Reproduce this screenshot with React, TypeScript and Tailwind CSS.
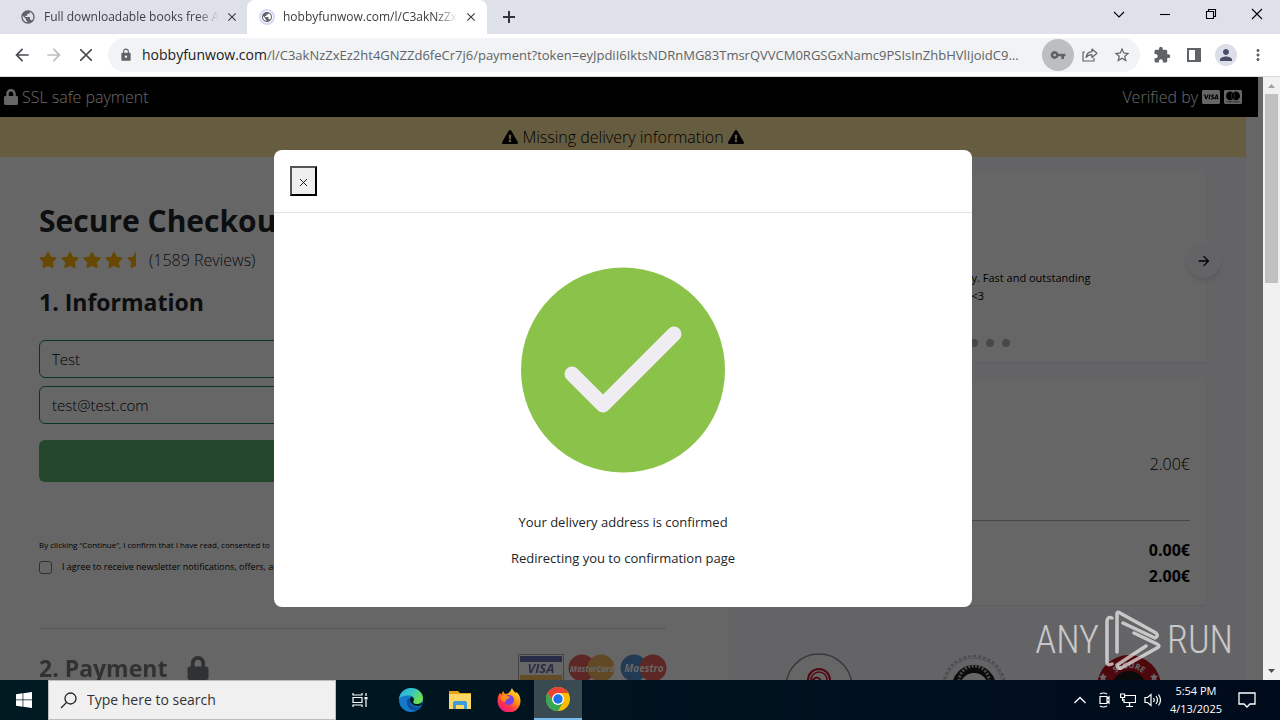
import type { ReactNode } from "react";
import {
  MdArrowBack,
  MdArrowForward,
  MdClose,
  MdExtension,
  MdLock,
  MdMoreVert,
  MdPerson,
  MdPublic,
  MdStarBorder,
  MdVpnKey,
} from "react-icons/md";
import { FaCcMastercard, FaCcVisa, FaExclamationTriangle, FaLock, FaStar, FaStarHalf } from "react-icons/fa";

function IconButton({ label, className = "", children }: { label: string; className?: string; children: ReactNode }) {
  return (
    <button type="button" aria-label={label} className={`flex h-8 w-8 shrink-0 items-center justify-center ${className}`}>
      {children}
    </button>
  );
}

function TabStrip() {
  return (
    <div className="flex h-[34px] shrink-0 items-stretch bg-[#dee1e9] text-xs text-[#3c4043]">
      <div className="flex w-[247px] items-center pl-5 pr-[7px]">
        <MdPublic className="h-4 w-4 shrink-0 text-[#5f6368]" />
        <span className="ml-2 flex-1 whitespace-nowrap [mask-image:linear-gradient(to_right,#000_85%,transparent_97%)]">
          Full downloadable books free A
        </span>
        <button type="button" aria-label="Close tab" className="p-px">
          <MdClose className="h-3.5 w-3.5" />
        </button>
      </div>
      <div className="flex w-[240px] items-center rounded-t-lg bg-white pl-3 pr-2">
        <span className="flex h-4 w-4 shrink-0 items-center justify-center rounded-full border-2 border-[#d5dbf7]">
          <MdPublic className="h-3 w-3 shrink-0 text-[#5f6368]" />
        </span>
        <span className="ml-2 flex-1 whitespace-nowrap [mask-image:linear-gradient(to_right,#000_85%,transparent_97%)]">
          hobbyfunwow.com/l/C3akNzZx
        </span>
        <button type="button" aria-label="Close tab" className="p-px">
          <MdClose className="h-3.5 w-3.5" />
        </button>
      </div>
      <button type="button" aria-label="New tab" className="flex w-11 items-center justify-center">
        <svg viewBox="0 0 12 12" className="h-3 w-3" stroke="#303338" strokeWidth="2">
          <path d="M6 0v12M0 6h12" />
        </svg>
      </button>
      <div className="ml-auto flex h-7 text-black">
        {[
          ["Search tabs", "M1 4l5 5 5-5"],
          ["Minimize", "M1 6.5h10"],
          ["Restore", "M1.5 3.5h7v7h-7zM3.5 3.5v-2h7v7h-2"],
          ["Close", "M1 1l10 10M11 1L1 11"],
        ].map(([label, d]) => (
          <button key={label} type="button" aria-label={label} className="flex w-[46px] items-center justify-center">
            <svg viewBox="0 0 12 12" className="h-3 w-3" fill="none" stroke="currentColor" strokeWidth="1.1">
              <path d={d} />
            </svg>
          </button>
        ))}
      </div>
    </div>
  );
}

function Toolbar() {
  return (
    <div className="flex h-[43px] shrink-0 items-center border-b border-[#d8dadd] bg-white pl-[6px] pr-[6px] text-[#5f6368]">
      <IconButton label="Back" className="text-[#4a4d51]">
        <MdArrowBack className="h-5 w-5" />
      </IconButton>
      <IconButton label="Forward" className="text-[#bcbec1]">
        <MdArrowForward className="h-5 w-5" />
      </IconButton>
      <IconButton label="Stop loading" className="text-[#4a4d51]">
        <svg viewBox="0 0 12 12" className="h-3 w-3" stroke="currentColor" strokeWidth="1.6">
          <path d="M0 0l12 12M12 0L0 12" />
        </svg>
      </IconButton>
      <div className="ml-[6px] flex h-[34px] min-w-0 flex-1 items-center rounded-full bg-[#f1f3f4] pl-[11px] pr-[2px]">
        <MdLock className="h-3.5 w-3.5 shrink-0" />
        <span className="ml-[9px] min-w-0 flex-1 overflow-hidden whitespace-nowrap text-[13px] leading-5">
          <span className="text-sm text-[#202124]">hobbyfunwow.com</span>
          /l/C3akNzZxEz2ht4GNZZd6feCr7j6/payment?token=eyJpdiI6IktsNDRnMG83TmsrQVVCM0RGSGxNamc9PSIsInZhbHVlIjoidC9...
        </span>
        <IconButton label="Saved passwords" className="rounded-full bg-[#bdbebf]">
          <MdVpnKey className="h-4 w-4" />
        </IconButton>
        <IconButton label="Share">
          <svg viewBox="0 0 16 16" className="h-4 w-4" fill="none" stroke="currentColor" strokeWidth="1.2" strokeLinejoin="round">
            <path d="M3 5H1v9h11v-3" />
            <path d="M4 10.500C4.500 7 6.500 5 10 4.700V2l5 4.300-5 4.200V7.700C7.500 7.700 5.500 8.500 4 10.500z" />
          </svg>
        </IconButton>
        <IconButton label="Bookmark">
          <MdStarBorder className="h-[18px] w-[18px]" />
        </IconButton>
      </div>
      <div className="ml-[6px] flex">
        <IconButton label="Extensions">
          <MdExtension className="h-[18px] w-[18px]" />
        </IconButton>
        <IconButton label="Side panel">
          <svg viewBox="0 0 14 14" className="h-3.5 w-3.5" fill="none" stroke="currentColor" strokeWidth="2">
            <path d="M1 1h12v12H1z" />
            <path d="M9 1h4v12H9z" fill="currentColor" />
          </svg>
        </IconButton>
        <IconButton label="Profile">
          <span className="flex h-[22px] w-[22px] items-center justify-center rounded-full bg-[#dcdfe9] text-[#474e66]">
            <MdPerson className="h-[18px] w-[18px]" />
          </span>
        </IconButton>
        <IconButton label="Menu">
          <MdMoreVert className="h-[18px] w-[18px]" />
        </IconButton>
      </div>
    </div>
  );
}

function CardLogos() {
  return (
    <div className="flex gap-1">
      <svg viewBox="0 0 46 32" className="h-8 w-[46px]">
        <path d="M.5.5h45v31H.5z" fill="#fff" stroke="#888" />
        <path d="M2 2h42v6H2z" fill="#2b2f8a" />
        <path d="M2 21h42v9H2z" fill="#f0a820" />
        <text x="23" y="19" textAnchor="middle" fontSize="13" fontWeight="bold" fontStyle="italic" fill="#2b2f8a">
          VISA
        </text>
      </svg>
      <svg viewBox="0 0 48 32" className="h-8 w-12">
        <circle cx="14" cy="14" r="13.500" fill="#e0201a" />
        <circle cx="33" cy="14" r="13.500" fill="#f09a1a" />
        <text x="24" y="18" textAnchor="middle" fontSize="8" fontWeight="bold" fontStyle="italic" fill="#fff">
          MasterCard
        </text>
      </svg>
      <svg viewBox="0 0 48 32" className="h-8 w-12">
        <circle cx="14" cy="14" r="13.500" fill="#0f66c4" />
        <circle cx="33" cy="14" r="13.500" fill="#e0201a" />
        <text x="24" y="18" textAnchor="middle" fontSize="10" fontWeight="bold" fontStyle="italic" fill="#fff">
          Maestro
        </text>
      </svg>
    </div>
  );
}

function CheckoutForm() {
  return (
    <form className="col-span-7 pl-[39px] pr-[61px] pt-10 text-[#212529]">
      <h1 className="text-[30px] font-bold leading-[48px]">Secure Checkout</h1>
      <div className="mt-[3px] flex h-6 items-center">
        <div className="flex gap-1 text-[#ffb400]">
          {[1, 2, 3, 4].map((n) => (
            <FaStar key={n} className="h-[18px] w-[18px]" />
          ))}
          <FaStarHalf className="h-[18px] w-[18px]" />
        </div>
        <span className="ml-1 text-base font-light">(1589 Reviews)</span>
      </div>
      <h2 className="mt-3 text-[23px] font-bold leading-9">1. Information</h2>
      <input
        aria-label="Name"
        defaultValue="Test"
        className="mt-5 block h-[38px] w-full rounded-md border border-[#198754] bg-white px-3 text-[15px] font-light text-black"
      />
      <input
        aria-label="Email"
        type="email"
        defaultValue="test@test.com"
        className="mt-2 block h-[38px] w-full rounded-md border border-[#198754] bg-white px-3 text-[15px] font-light text-black"
      />
      <button type="submit" className="mt-4 block h-[42px] w-full rounded-md bg-[#5cb46e] text-white">
        Continue
      </button>
      <p className="mt-[55px] whitespace-nowrap text-[8px] leading-4 text-black">
        By clicking “Continue”, I confirm that I have read, consented to
      </p>
      <label className="mt-[6px] flex h-4 items-center text-[9px] text-black">
        <input type="checkbox" className="h-[13px] w-[13px] appearance-none rounded-[3px] border border-[#767676] bg-white" />
        <span className="ml-[10px] whitespace-nowrap">I agree to receive newsletter notifications, offers, and</span>
      </label>
      <hr className="mt-[53px] border-[#dadada]" />
      <div className="mt-[21px] flex items-start justify-between">
        <h2 className="flex items-center gap-5 text-[23px] font-bold leading-9 opacity-60">
          2. Payment
          <FaLock className="h-6 w-[22px]" />
        </h2>
        <div className="-mr-[2px] pt-1 opacity-70">
          <CardLogos />
        </div>
      </div>
    </form>
  );
}

function Badges() {
  return (
    <div className="-ml-[25px] mt-12 flex justify-around">
      <svg viewBox="0 0 68 68" className="h-[68px] w-[68px]" fill="none">
        <circle cx="34" cy="34" r="33" fill="#fff" stroke="#8d8d96" strokeWidth="1.500" />
        <circle cx="34" cy="27" r="11" stroke="#c81426" strokeWidth="2" />
        <circle cx="34" cy="27" r="8" stroke="#c81426" strokeWidth="1.500" />
        <path d="M27 28c4-5 7-4 9 0s5 2 6 1" stroke="#c81426" strokeWidth="2" />
      </svg>
      <svg viewBox="0 0 68 68" className="h-[68px] w-[68px]" fill="none">
        <circle cx="34" cy="34" r="31" stroke="#b8b8bc" strokeWidth="2" strokeDasharray="3 2" />
        <circle cx="34" cy="34" r="29" fill="#faf9ff" stroke="#c2c2c8" />
        <circle cx="34" cy="34" r="18" fill="#fff" stroke="#1d1d1d" strokeWidth="8" />
        <path d="M19 31a15 15 0 0 1 30 0" stroke="#bbb" strokeWidth="3" strokeDasharray="2 1.500" transform="translate(0 -3)" />
      </svg>
      <svg viewBox="0 0 68 68" className="h-[68px] w-[68px]" fill="none">
        <defs>
          <path id="seal-arc" d="M13 36a21 21 0 0 1 42 0" />
        </defs>
        <circle cx="34" cy="34" r="32" fill="#c31622" />
        <circle cx="34" cy="36" r="18" fill="#1c1c1c" />
        <text fontSize="8" fontWeight="bold" fill="#fff">
          <textPath href="#seal-arc" startOffset="50%" textAnchor="middle">
            SECURE
          </textPath>
        </text>
        <path d="M8 20l1.200 2.600 2.800.4-2 2 .5 2.800L8 26.500l-2.500 1.300.5-2.800-2-2 2.800-.4zM59 20l1.200 2.600 2.800.4-2 2 .5 2.800-2.500-1.300-2.500 1.300.5-2.800-2-2 2.800-.4z" fill="#fff" />
      </svg>
    </div>
  );
}

function OrderSummary() {
  return (
    <aside className="col-span-5 bg-[#f9f8ff] px-10 pt-3.5 text-[#212529]">
      <section className="relative flex h-[191px] flex-col justify-end bg-white pb-[15px] shadow-xs">
        <p className="pl-36 text-[11px] leading-[18px] text-black">
          Great quality. Fast and outstanding
          <br />
          I loved it all &lt;3
        </p>
        <div className="mt-[34px] flex justify-center gap-2">
          <span className="h-2 w-4 rounded-full bg-[#b5b5b5]" />
          <span className="h-2 w-2 rounded-full bg-[#b5b5b5]" />
          <span className="h-2 w-2 rounded-full bg-[#b5b5b5]" />
        </div>
        <button
          type="button"
          aria-label="Next review"
          className="absolute -right-[15px] top-[73px] flex h-[34px] w-[34px] items-center justify-center rounded-full bg-[#f9f8ff] text-black shadow-md"
        >
          <MdArrowForward className="h-4 w-4" />
        </button>
      </section>
      <section className="mt-4 bg-white px-4 pb-4 pt-[72px] text-right shadow-xs">
        <p className="text-base font-light leading-7 text-black">2.00€</p>
        <hr className="mb-4 mt-[42px] border-[#b0b0b0]" />
        <p className="text-base font-bold leading-[26px] text-black">0.00€</p>
        <p className="text-base font-bold leading-[26px] text-black">2.00€</p>
      </section>
      <Badges />
    </aside>
  );
}

function ConfirmationDialog() {
  return (
    <div className="absolute inset-0 flex items-start justify-center bg-black/60 pr-[17px] pt-[73px]">
      <div role="dialog" aria-label="Delivery confirmation" className="w-full max-w-[698px] rounded-lg bg-white text-[#212529]">
        <div className="border-b border-[#dee2e6] p-4">
          <button
            type="button"
            aria-label="Close"
            className="flex h-[30px] w-[27px] items-center justify-center border-2 border-b-black border-l-[#555] border-r-black border-t-[#555] bg-[#efefef] pt-[2px]"
          >
            <svg viewBox="0 0 8 8" className="h-[7px] w-[7px]" stroke="#000">
              <path d="M0 0l8 8M8 0L0 8" />
            </svg>
          </button>
        </div>
        <div className="flex flex-col items-center pb-[37px] pt-[54px] text-[13px] leading-6">
          <svg viewBox="0 0 204 206" className="h-[206px] w-[204px]">
            <ellipse cx="102" cy="103" rx="102" ry="102.500" fill="#8bc34a" />
            <path d="M51 107l31 31 71-71" fill="none" stroke="#efedf2" strokeWidth="15" strokeLinecap="round" strokeLinejoin="round" />
          </svg>
          <p className="mt-[37px]">Your delivery address is confirmed</p>
          <p className="mt-3">Redirecting you to confirmation page</p>
        </div>
      </div>
    </div>
  );
}

function Watermark() {
  return (
    <div className="absolute bottom-2.5 right-[30px] flex items-center gap-[6px] text-white/65">
      <span className="font-['Roboto_Condensed','Liberation_Sans_Narrow','Roboto',sans-serif] text-[38px] font-light leading-[60px]">ANY</span>
      <svg viewBox="0 0 56 60" className="h-[60px] w-14" fill="none" stroke="currentColor" strokeWidth="3.500" strokeLinejoin="round" strokeLinecap="round">
        <path d="M7 8Q2 6 2 12v40q0 4 5 2" />
        <path d="M12 42V4q0-3 3-1l36 20q3 3-1 5L18 13" />
        <path d="M29 23l23 11q4 2 0 4L16 58q-4 1-4-3l29-19" />
      </svg>
      <span className="font-['Roboto_Condensed','Liberation_Sans_Narrow','Roboto',sans-serif] text-[38px] font-light leading-[60px]">RUN</span>
    </div>
  );
}

function ScrollBar() {
  return (
    <div className="flex w-[17px] shrink-0 flex-col items-center bg-[#f1f1f1]">
      <svg viewBox="0 0 17 17" className="h-[17px] w-[17px]">
        <path d="M5 11h7L8.500 7z" fill="#a3a3a3" />
      </svg>
      <div className="h-[189px] w-[13px] bg-[#c1c1c1]" />
      <svg viewBox="0 0 17 17" className="mt-auto h-[17px] w-[17px]">
        <path d="M5 6h7l-3.500 4z" fill="#505050" />
      </svg>
    </div>
  );
}

function TaskbarButton({ label, active = false, children }: { label: string; active?: boolean; children: ReactNode }) {
  return (
    <button
      type="button"
      aria-label={label}
      className={
        active
          ? "flex h-10 w-12 items-center justify-center border-b-2 border-[#76b9ed] bg-[#3a4a52]"
          : "flex h-10 w-12 items-center justify-center"
      }
    >
      {children}
    </button>
  );
}

function Taskbar() {
  return (
    <footer className="flex h-10 shrink-0 items-center bg-linear-to-r from-[#001a22] to-[#000b1c] text-white">
      <TaskbarButton label="Start">
        <svg viewBox="0 0 16 16" className="h-4 w-4" fill="#fff">
          <path d="M0 2.200l6.600-.9v6.300H0zM7.300 1.200L16 0v7.600H7.300zM0 8.300h6.600v6.400L0 13.800zM7.300 8.300H16V16l-8.700-1.200z" />
        </svg>
      </TaskbarButton>
      <label className="flex h-full w-72 items-center border border-[#bdbdbd] bg-[#f0f0f0] pl-[11px] text-black">
        <svg viewBox="0 0 17 17" className="h-[17px] w-[17px] shrink-0" fill="none" stroke="#222" strokeWidth="1.300">
          <circle cx="10.500" cy="6.500" r="5.500" />
          <path d="M6.500 10.500L1 16" />
        </svg>
        <input
          aria-label="Search"
          placeholder="Type here to search"
          className="ml-[10px] min-w-0 flex-1 bg-transparent text-sm placeholder:text-[#333]"
        />
      </label>
      <TaskbarButton label="Task View">
        <svg viewBox="0 0 16 16" className="h-4 w-4" fill="none" stroke="#fff" strokeWidth="1.200">
          <path d="M1 1v2h9V1M1 15v-2h9v2M1 5.500h9v5H1zM14 1v3M14 8v7" />
          <path d="M12.500 5h3v2.500h-3z" fill="#fff" stroke="none" />
        </svg>
      </TaskbarButton>
      <div className="flex gap-px pl-[3px]">
        <TaskbarButton label="Edge">
          <svg viewBox="0 0 24 24" className="h-6 w-6">
            <defs>
              <linearGradient id="edge-top" x1="0" y1="0" x2="1" y2="0.500">
                <stop offset="0" stopColor="#2aa8e8" />
                <stop offset="0.500" stopColor="#35c5c9" />
                <stop offset="1" stopColor="#6fe04d" />
              </linearGradient>
            </defs>
            <circle cx="12" cy="12" r="12" fill="#1578c9" />
            <path d="M0 11C1 4 6 0 12 0c7 0 12 5 12 10 0 4-3 6-6 6-3.500 0-4.500-1.500-3.500-3 1.500-3-1-5.500-4.500-5.500C5 7.500 1 9 0 11z" fill="url(#edge-top)" />
            <path d="M8 12c-1 6 3 11 9 10.500 3-.5 5-3 5.500-4.500-4.500 2-9 1-11-2-1-2-.5-4 1-5-2-1-4 0-4.500 1z" fill="#0c4f9d" />
            <path d="M14.500 13c1-2 0-4-2-4.500-1.500 1-2.200 3.500-1 5.500 2 4 7 5 11 3l1-3c-1.500 1.500-3.500 2-5.500 2-3.500 0-4.500-1.500-3.500-3z" fill="#001a22" />
          </svg>
        </TaskbarButton>
        <TaskbarButton label="File Explorer">
          <svg viewBox="0 0 22 20" className="h-5 w-[22px]">
            <path d="M0 1h9l2 2h11v5H0z" fill="#e8a317" />
            <path d="M0 4h22v15H0z" fill="#fcd766" />
            <path d="M4 19v-6q0-2 2-2h10q2 0 2 2v6h-3v-4H7v4z" fill="#3d9bd9" />
          </svg>
        </TaskbarButton>
        <TaskbarButton label="Firefox">
          <svg viewBox="0 0 24 24" className="h-6 w-6">
            <defs>
              <linearGradient id="fox" x1="0.900" y1="0" x2="0.200" y2="1">
                <stop offset="0" stopColor="#fff44f" />
                <stop offset="0.400" stopColor="#ff980e" />
                <stop offset="0.700" stopColor="#ff3647" />
                <stop offset="1" stopColor="#e31587" />
              </linearGradient>
            </defs>
            <path d="M3 5l1.500 1.500L6 3l2 3 3-.5L13.500 3 15 0c1 3 3 4 4 5l.5-1c3 2.500 4 6 4 9A11.500 11.500 0 0 1 .5 13C.5 9 1.500 7 3 5z" fill="url(#fox)" />
            <circle cx="12" cy="12" r="5" fill="#7542e5" />
            <path d="M3.500 9c2-2 5-2 7-1l2.500 1c0 1.500-3 1.500-3.500 3-1 0-1.500 1-1 2-3 0-5-2-5-5z" fill="#ff8a16" />
          </svg>
        </TaskbarButton>
        <TaskbarButton label="Chrome" active>
          <svg viewBox="0 0 24 24" className="h-6 w-6">
            <circle cx="12" cy="12" r="12" fill="#fbbc04" />
            <path d="M1.600 6l5.200 9L12 12V6h10.400A12 12 0 0 0 1.600 6z" fill="#ea4335" />
            <path d="M1.600 6l5.200 9 5.200 3 5.200-3L12 24A12 12 0 0 1 1.600 6z" fill="#34a853" />
            <circle cx="12" cy="12" r="6" fill="#fff" />
            <circle cx="12" cy="12" r="4.700" fill="#1a73e8" />
          </svg>
        </TaskbarButton>
      </div>
      <div className="ml-auto flex items-center gap-2">
        <svg viewBox="0 0 16 16" className="h-4 w-4" fill="none" stroke="#fff" strokeWidth="1.300">
          <path d="M2.500 11L8 5.500l5.500 5.500" />
        </svg>
        <svg viewBox="0 0 16 16" className="h-4 w-4" fill="none" stroke="#fff" strokeWidth="1.200">
          <path d="M4 4.500h7v7H4zM11 7l2-2v6l-2-2M4 2q3.500-2 7 0M4 14q3.500 2 7 0" />
        </svg>
        <svg viewBox="0 0 16 16" className="h-4 w-4" fill="none" stroke="#fff" strokeWidth="1.200">
          <path d="M5 3.500h10.500v7H4V7M9.500 10.500v4M6 14.500h7M.6 2h4v3.500h-4zM2.600 5.500V9" />
        </svg>
        <svg viewBox="0 0 18 16" className="h-4 w-[18px]" fill="none" stroke="#fff" strokeWidth="1.200">
          <path d="M1 5.500h2.500L7 2.500v11l-3.500-3H1zM9.500 6q1.500 2 0 4M12 4q3 4 0 8M14.500 2.500q4 5.500 0 11" />
        </svg>
        <div className="text-center text-[11px] leading-[18px]">
          <div>5:54 PM</div>
          <div>4/13/2025</div>
        </div>
        <button type="button" aria-label="Notifications" className="ml-2 mr-6">
          <svg viewBox="0 0 18 18" className="h-[18px] w-[18px]" fill="none" stroke="#fff" strokeWidth="1.300">
            <path d="M1 2h16v11h-5l-3 3-3-3H1z" />
          </svg>
        </button>
      </div>
    </footer>
  );
}

export default function App() {
  return (
    <div className="flex h-screen flex-col overflow-hidden bg-white font-['Open_Sans','Noto_Sans',sans-serif]">
      <header>
        <TabStrip />
        <Toolbar />
      </header>
      <div className="flex min-h-0 flex-1">
        <main className="relative min-w-0 flex-1 overflow-hidden">
          <div className="mr-[5px] flex h-10 items-center justify-between bg-black pl-1 pr-4 text-base font-light text-white">
            <span className="flex items-center gap-1">
              <FaLock className="h-4 w-3.5" />
              SSL safe payment
            </span>
            <span className="flex items-center gap-1">
              Verified by
              <FaCcVisa className="h-[18px] w-[18px]" />
              <FaCcMastercard className="h-[18px] w-[18px]" />
            </span>
          </div>
          <div className="mr-[17px]">
            <div className="flex h-10 items-center justify-center gap-1 bg-[#ffe6a0] text-base font-light text-black">
              <FaExclamationTriangle className="h-4 w-4" />
              Missing delivery information
              <FaExclamationTriangle className="h-4 w-4" />
            </div>
            <div className="grid min-h-screen grid-cols-12">
              <CheckoutForm />
              <OrderSummary />
            </div>
          </div>
          <ConfirmationDialog />
          <Watermark />
        </main>
        <ScrollBar />
      </div>
      <Taskbar />
    </div>
  );
}
